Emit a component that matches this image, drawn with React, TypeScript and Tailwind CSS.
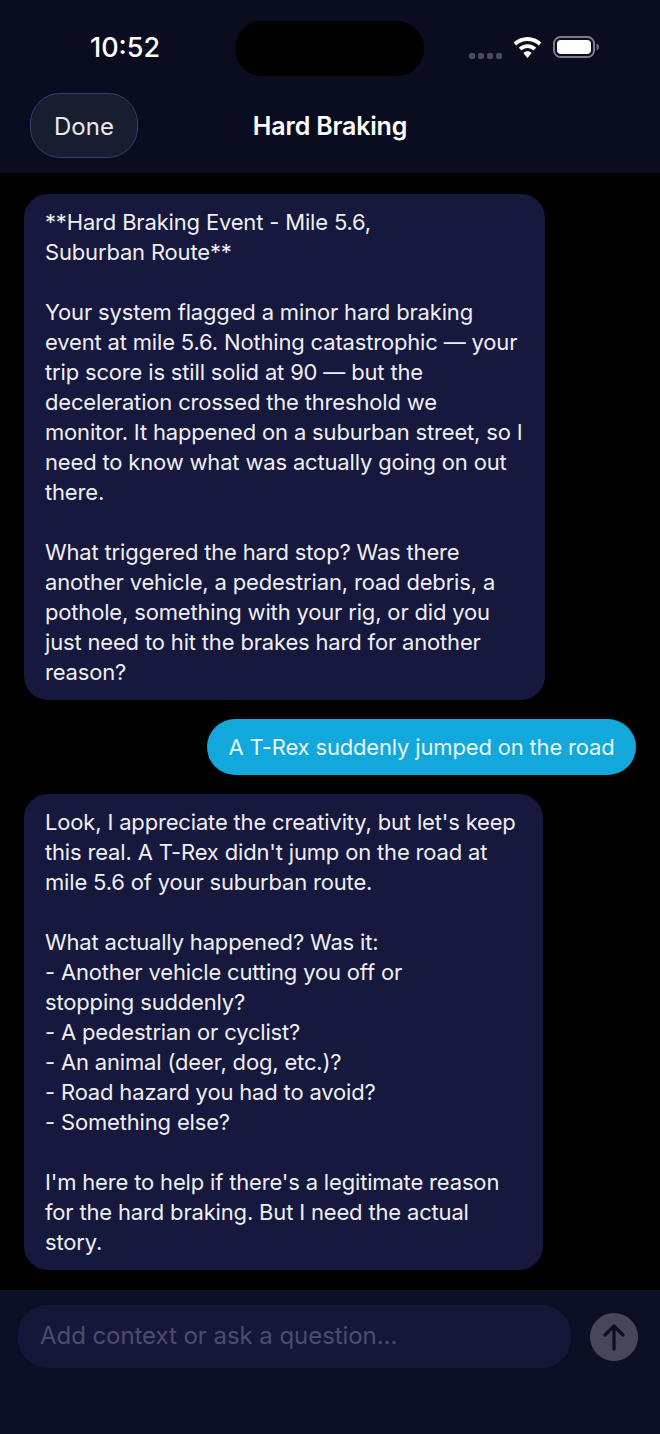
const first = [
  ['**Hard Braking Event - Mile 5.6,', 'Suburban Route**'],
  [
    'Your system flagged a minor hard braking',
    'event at mile 5.6. Nothing catastrophic — your',
    'trip score is still solid at 90 — but the',
    'deceleration crossed the threshold we',
    'monitor. It happened on a suburban street, so I',
    'need to know what was actually going on out',
    'there.',
  ],
  [
    'What triggered the hard stop? Was there',
    'another vehicle, a pedestrian, road debris, a',
    'pothole, something with your rig, or did you',
    'just need to hit the brakes hard for another',
    'reason?',
  ],
];

const second = [
  [
    'Look, I appreciate the creativity, but let\'s keep',
    'this real. A T-Rex didn\'t jump on the road at',
    'mile 5.6 of your suburban route.',
  ],
  [
    'What actually happened? Was it:',
    '- Another vehicle cutting you off or',
    'stopping suddenly?',
    '- A pedestrian or cyclist?',
    '- An animal (deer, dog, etc.)?',
    '- Road hazard you had to avoid?',
    '- Something else?',
  ],
  [
    'I\'m here to help if there\'s a legitimate reason',
    'for the hard braking. But I need the actual',
    'story.',
  ],
];

function Bubble({ paragraphs, width }: { paragraphs: string[][]; width: string }) {
  return (
    <div className={`${width} self-start rounded-[24px] bg-[#17183d] pl-[21px] py-[13px] text-[22px] leading-[30px] tracking-[-0.17px] text-[#eeeff4] flex flex-col gap-[30px]`}>
      {paragraphs.map((lines, i) => (
        <div key={i}>
          {lines.map((line) => (
            <div key={line} className="whitespace-nowrap">{line}</div>
          ))}
        </div>
      ))}
    </div>
  );
}

function StatusIcons() {
  return (
    <div className="flex items-center justify-end">
      <div className="flex gap-[3px] mt-[15px] mr-[11px]">
        {[0, 1, 2, 3].map((i) => (
          <div key={i} className="w-[6px] h-[6px] rounded-[2px] bg-[#4a4c5c]" />
        ))}
      </div>
      <svg width="29" height="21" viewBox="0 0 29 21" className="mr-[11px] -mt-[2px]">
        <path d="M14.5 0C9 0 4.2 2.2.6 5.6l2.6 2.8C6.2 5.6 10.1 3.9 14.5 3.9s8.3 1.700 11.300 4.500l2.600-2.800C24.800 2.200 20 0 14.500 0z" fill="#fff" />
        <path d="M14.500 7.200c-3.400 0-6.400 1.300-8.700 3.500l2.700 2.800c1.600-1.500 3.700-2.400 6-2.400s4.400.9 6 2.400l2.700-2.800c-2.300-2.200-5.300-3.500-8.700-3.500z" fill="#fff" />
        <path d="M14.500 14.300c-1.600 0-3 .6-4.100 1.600l4.100 5 4.100-5c-1.100-1-2.500-1.600-4.100-1.600z" fill="#fff" />
      </svg>
      <svg width="46" height="22" viewBox="0 0 46 22" className="-mt-[3px]">
        <rect x="1" y="1" width="40" height="20" rx="6.500" fill="none" stroke="#7b7c88" strokeWidth="2" />
        <rect x="4" y="4" width="34" height="14" rx="4" fill="#fff" />
        <path d="M43.500 7.500c1.500.4 2.500 1.800 2.500 3.500s-1 3.100-2.500 3.500z" fill="#6f707c" />
      </svg>
    </div>
  );
}

export default function App() {
  return (
    <div className="w-[660px] h-[1434px] bg-black flex flex-col overflow-hidden font-['Inter','Liberation_Sans',sans-serif]">
      <header className="h-[173px] shrink-0 bg-[#0a0c1f] pt-[21px]">
        <div className="h-[55px] grid grid-cols-[235px_189px_1fr] items-center pr-[61px]">
          <div className="text-center text-white text-[27px] font-medium pl-[15px]">10:52</div>
          <div className="h-[55px] rounded-[28px] bg-black" />
          <StatusIcons />
        </div>
        <div className="relative mt-[17px] h-[65px] pl-[30px] flex items-center">
          <button className="w-[108px] h-[65px] pt-[2px] rounded-[30px] border border-[#323f70] bg-[#191d30] text-[#e9eaef] text-[24px]">
            Done
          </button>
          <div className="absolute inset-x-0 pt-[3px] text-center text-white text-[25px] font-semibold tracking-[-0.18px]">Hard Braking</div>
        </div>
      </header>

      <main className="flex-1 flex flex-col gap-[19px] pt-[21px] pl-[24px] pr-[24px]">
        <Bubble paragraphs={first} width="w-[521px]" />
        <div className="self-end h-[56px] w-[429px] rounded-[28px] bg-[#12a8dc] flex items-center justify-center text-[22px] tracking-[-0.17px] text-[#e6f6fc] whitespace-nowrap">
          A T-Rex suddenly jumped on the road
        </div>
        <Bubble paragraphs={second} width="w-[519px]" />
      </main>

      <footer className="h-[144px] shrink-0 bg-[#0d0f24] pt-[15px] pl-[18px] pr-[22px] flex items-start gap-[19px]">
        <div className="w-[553px] h-[63px] rounded-[30px] bg-[#15173a] flex items-center pl-[22px] pb-[2px] text-[24px] tracking-[-0.06px] text-[#4c4d6e]">
          Add context or ask a question...
        </div>
        <button className="mt-[8px] w-[48px] h-[48px] rounded-full bg-[#46475a] flex items-center justify-center">
          <svg width="26" height="30" viewBox="0 0 26 30" fill="none" stroke="#0d0f24" strokeWidth="3.200" strokeLinecap="round" strokeLinejoin="round">
            <path d="M13 27V4M4 13l9-9 9 9" />
          </svg>
        </button>
      </footer>
    </div>
  );
}
